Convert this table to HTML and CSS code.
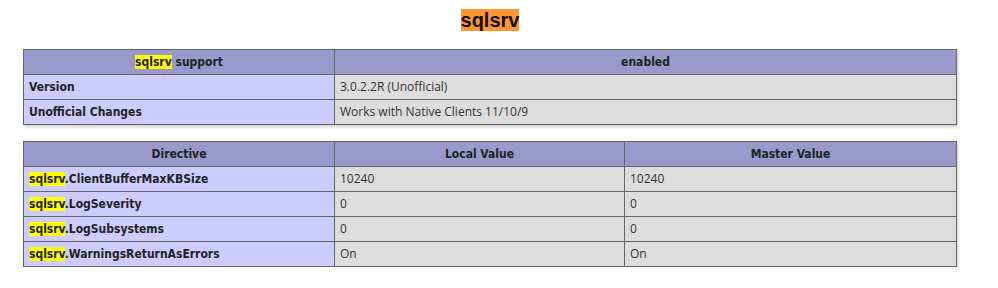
FILE: index.html
```html
<!DOCTYPE html>
<html>
<head>
<meta charset="utf-8">
<title>sqlsrv</title>
<link rel="stylesheet" href="styles.css">
</head>
<body>
<div class="center">
  <h2 class="title"><span class="find-active">sqlsrv</span></h2>
  <table class="info">
    <tr class="h"><th class="c1"><span class="find">sqlsrv</span> support</th><th>enabled</th></tr>
    <tr><td class="e">Version</td><td class="v">3.0.2.2R (Unofficial)</td></tr>
    <tr><td class="e">Unofficial Changes</td><td class="v">Works with Native Clients 11/10/9</td></tr>
  </table>
  <table class="info second">
    <tr class="h"><th class="c1">Directive</th><th class="c2">Local Value</th><th>Master Value</th></tr>
    <tr><td class="e"><span class="find">sqlsrv</span>.ClientBufferMaxKBSize</td><td class="v">10240</td><td class="v">10240</td></tr>
    <tr><td class="e"><span class="find">sqlsrv</span>.LogSeverity</td><td class="v">0</td><td class="v">0</td></tr>
    <tr><td class="e"><span class="find">sqlsrv</span>.LogSubsystems</td><td class="v">0</td><td class="v">0</td></tr>
    <tr><td class="e"><span class="find">sqlsrv</span>.WarningsReturnAsErrors</td><td class="v">On</td><td class="v">On</td></tr>
  </table>
</div>
</body>
</html>
```
FILE: styles.css
```css
html, body {
  margin: 0;
  padding: 0;
  background: #fff;
  color: #222;
  font-family: "Liberation Sans", Arial, sans-serif;
}
.center {
  width: 980px;
  text-align: center;
}
.title {
  margin: 9px 0 0;
  font-size: 20px;
  line-height: 23px;
  font-weight: bold;
  color: #111;
}
.find-active {
  background: #ff9632;
}
.find {
  background: #ffff00;
}
.info {
  border-collapse: collapse;
  border: 0;
  width: 934px;
  margin: 17px auto 0;
  box-shadow: 1px 2px 3px #ccc;
  text-align: left;
}
.info.second {
  margin-top: 16px;
}
.info th, .info td {
  border: 1px solid #666;
  font-size: 12px;
  line-height: 16px;
  padding: 4px 5px;
  vertical-align: baseline;
}
.h th {
  background: #9999cc;
  font-family: "DejaVu Sans Condensed", "DejaVu Sans", sans-serif;
  font-stretch: condensed;
  font-weight: bold;
  text-align: center;
  color: #222;
}
.c1 {
  width: 300px;
}
.c2 {
  width: 279px;
}
.e {
  background: #ccccff;
  font-family: "DejaVu Sans Condensed", "DejaVu Sans", sans-serif;
  font-stretch: condensed;
  font-weight: bold;
  color: #222;
}
.v {
  background: #dddddd;
  font-family: "Open Sans", "Liberation Sans", sans-serif;
  color: #333;
}
```
